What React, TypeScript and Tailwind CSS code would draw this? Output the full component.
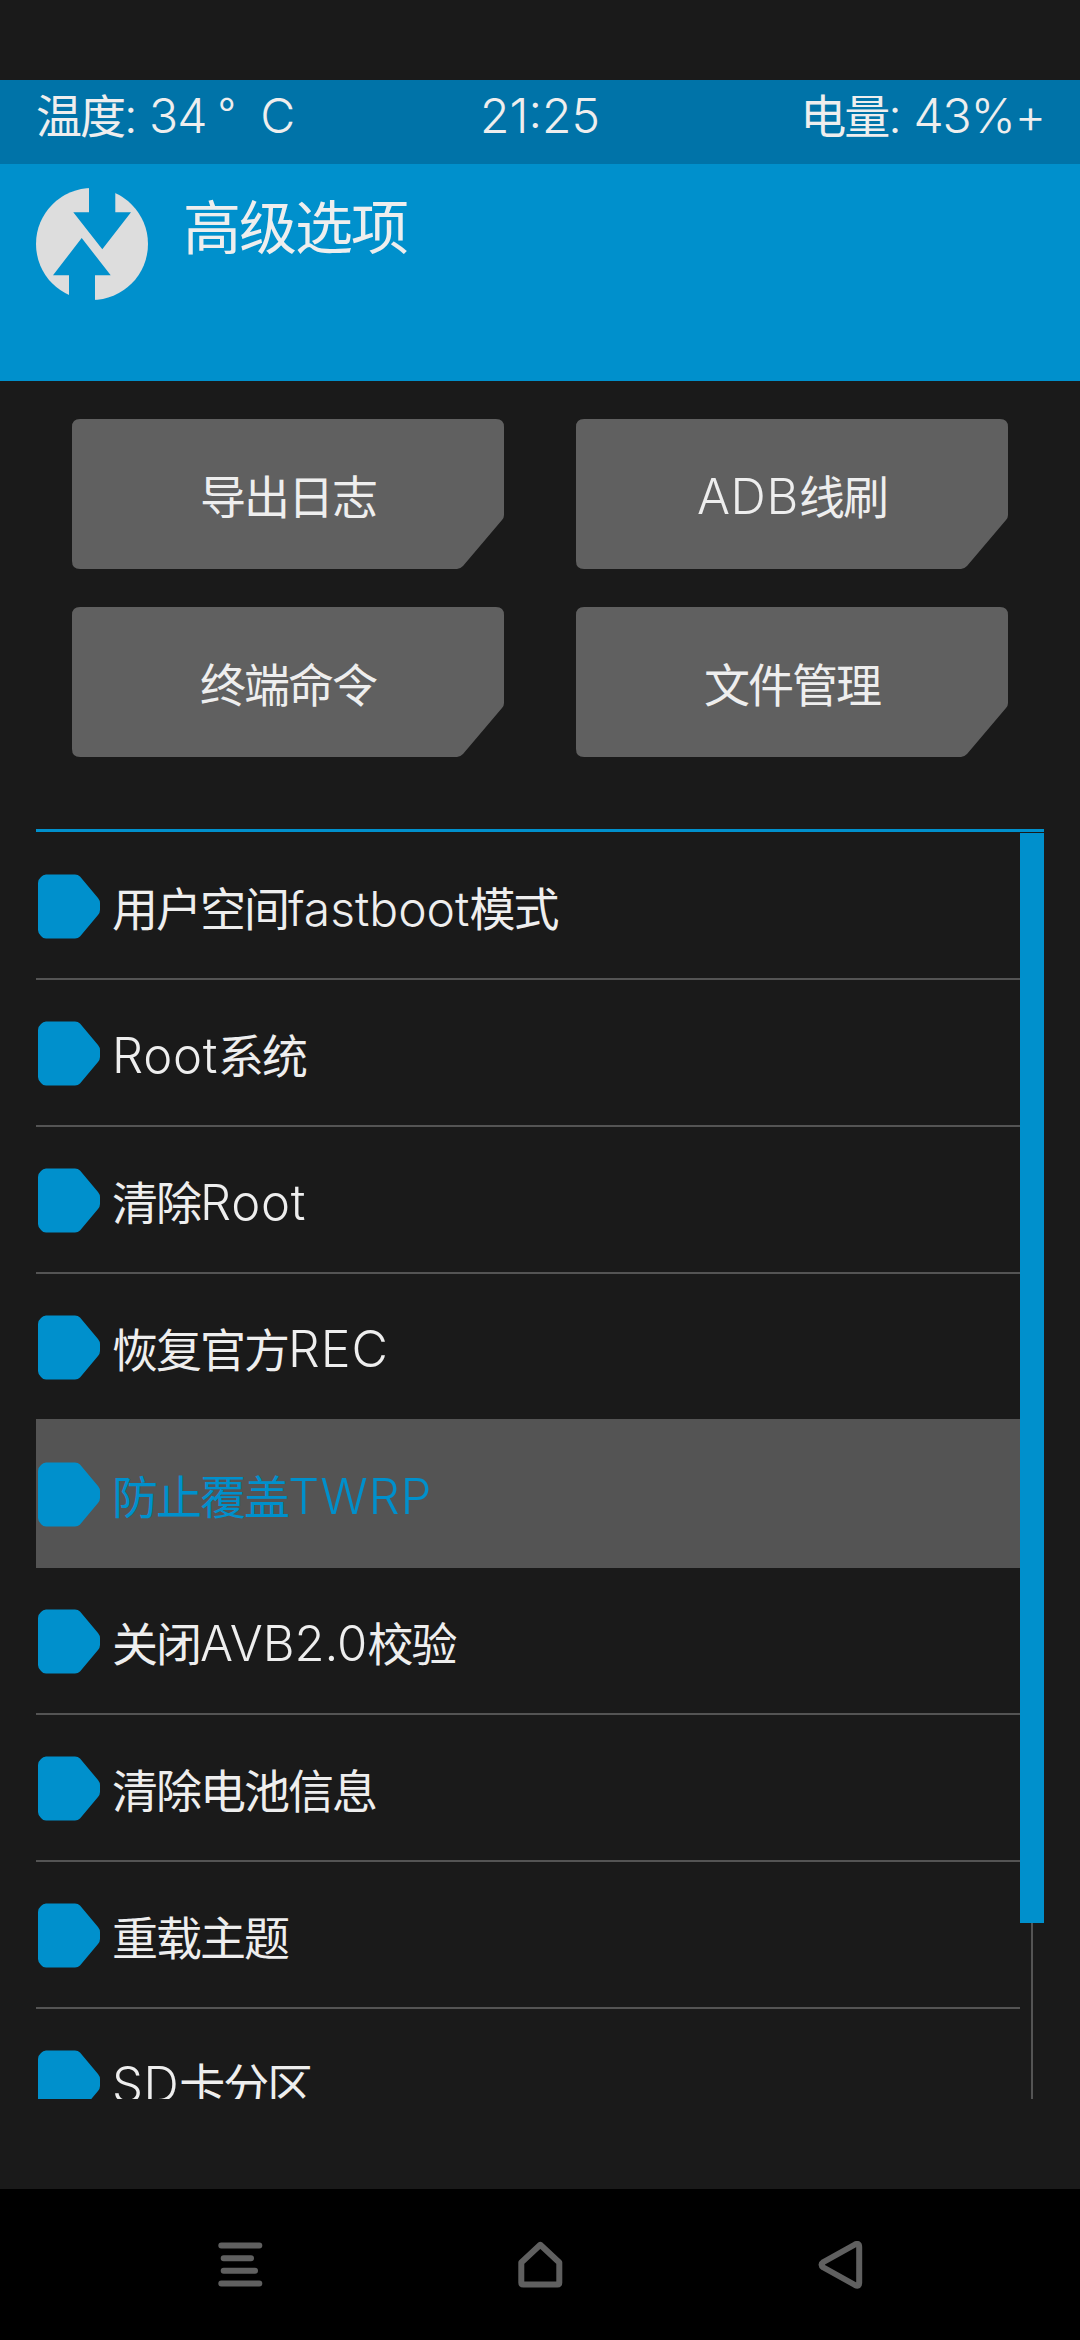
import React from "react";

const ROWS = [
  { text: "用户空间fastboot模式", latin: "text-[48px]" },
  { text: "Root系统", latin: "text-[49px] tracking-[0.7px]" },
  { text: "清除Root", latin: "text-[49px] tracking-[0.7px]" },
  { text: "恢复官方REC", latin: "text-[50px] tracking-[1px]" },
  { text: "防止覆盖TWRP", latin: "text-[49px] tracking-[1px]" },
  { text: "关闭AVB2.0校验", latin: "text-[49px]" },
  { text: "清除电池信息", latin: "text-[48px]" },
  { text: "重载主题", latin: "text-[48px]" },
  { text: "SD卡分区", latin: "text-[49px] tracking-[0.5px]" },
];
const SELECTED = 4;

/** Sets Latin runs in Inter and Han runs in Noto Sans CJK. */
function Mixed({ text, latin = "text-[48px]" }: { text: string; latin?: string }) {
  const runs = text.match(/[\x20-\x7e]+|[^\x20-\x7e]+/g) ?? [];
  return (
    <span className="whitespace-pre">
      {runs.map((run, i) =>
        /^[\x20-\x7e]/.test(run) ? (
          <span key={i} className={`font-['Inter','Liberation_Sans',sans-serif] font-[340] ${latin}`}>
            {run}
          </span>
        ) : (
          <span key={i} className="font-['Noto_Sans_CJK_SC',sans-serif] text-[46px] font-normal tracking-[-2px]">
            {run}
          </span>
        ),
      )}
    </span>
  );
}

function Logo() {
  return (
    <svg className="size-[112px]" viewBox="36 188 112 112">
      <circle cx="92" cy="244" r="56" fill="#dddddd" />
      <path
        fill="#0090cc"
        d="M89 186V212.3H73.3L102.3 249.3L131 212.3H115.3V186ZM69 302V275.3H53L81.7 238L110.7 275.3H95V302Z"
      />
    </svg>
  );
}

function ActionButton({ label }: { label: string }) {
  return (
    <button className="relative flex h-[150px] w-[432px] items-center justify-center">
      <svg className="absolute inset-0" width="432" height="150" viewBox="0 0 432 150">
        <path
          fill="#606060"
          d="M8 0H424Q432 0 432 8V96Q432 99 430 101L391 147Q388 150 385 150H8Q0 150 0 142V8Q0 0 8 0Z"
        />
      </svg>
      <span className="relative pt-[13px] leading-[60px]">
        <Mixed text={label} latin="text-[49px] tracking-[0.7px]" />
      </span>
    </button>
  );
}

function Bullet() {
  return (
    <svg className="h-[65px] w-[62px] shrink-0" viewBox="0 0 62 65">
      <path
        fill="#0090cc"
        d="M8 0.5H37Q40 0.5 42 2.5L60 24Q62 26.5 62 29V36Q62 38.5 60 41L42 62.5Q40 64.5 37 64.5H8Q5 64.5 3 62Q0 59.5 0 56V9Q0 5.500 3 3Q5 0.5 8 0.5Z"
      />
    </svg>
  );
}

function Row({ text, latin, selected }: { text: string; latin: string; selected: boolean }) {
  return (
    <li
      className={
        selected
          ? "-mt-[2px] flex h-[149px] shrink-0 items-start border-b-2 border-[#545454] bg-[#545454] pt-[43px] pl-[2px] text-[#0090cc]"
          : "flex h-[147px] shrink-0 items-start border-b-2 border-[#545454] pt-[41px] pl-[2px] text-[#eeeeee]"
      }
    >
      <Bullet />
      <span className="pt-[2px] pl-3 leading-[60px]">
        <Mixed text={text} latin={latin} />
      </span>
    </li>
  );
}

export default function App() {
  return (
    <div className="flex h-[2340px] w-[1080px] flex-col overflow-hidden bg-[#1a1a1a] pt-20 text-[#eeeeee]">
      <div className="grid h-[84px] shrink-0 grid-cols-3 items-baseline bg-[#0073a8] px-9 pt-[3px] leading-[60px]">
        <span className="whitespace-nowrap">
          <Mixed text="温度: 34" latin="text-[48px] tracking-[-1px]" />
          <span className="inline-block w-[54px] pl-[12px] font-['Noto_Sans_CJK_SC',sans-serif] text-[46px] font-normal">
            °
          </span>
          <Mixed text="C" />
        </span>
        <span className="text-center">
          <Mixed text="21:25" />
        </span>
        <span className="-mr-px text-right">
          <Mixed text="电量: 43%+" latin="text-[48px] tracking-[-1px]" />
        </span>
      </div>

      <header className="flex h-[217px] shrink-0 items-start bg-[#0090cc] pt-6 pl-9">
        <Logo />
        <h1 className="-mt-[2px] pl-[35px] font-['Noto_Sans_CJK_SC',sans-serif] text-[58px] leading-[76px] font-normal tracking-[-2px]">
          高级选项
        </h1>
      </header>

      <div className="grid shrink-0 grid-cols-2 gap-x-[72px] gap-y-[38px] px-[72px] pt-[38px]">
        <ActionButton label="导出日志" />
        <ActionButton label="ADB线刷" />
        <ActionButton label="终端命令" />
        <ActionButton label="文件管理" />
      </div>

      <main className="mx-9 mt-[72px] h-[1270px] shrink-0 border-t-[3px] border-[#0090cc] pt-px">
        <div className="flex h-[1266px] overflow-hidden">
          <ul className="flex w-[984px] flex-col overflow-hidden">
            {ROWS.map((r, i) => (
              <Row key={r.text} text={r.text} latin={r.latin} selected={i === SELECTED} />
            ))}
          </ul>
          <div className="flex w-6 flex-col items-center">
            <div className="h-[1090px] w-6 bg-[#0090cc]" />
            <div className="w-[2px] flex-1 bg-[#545454]" />
          </div>
        </div>
      </main>

      <nav className="mt-auto flex h-[151px] shrink-0 items-center justify-between bg-black px-[216px]">
        <svg className="size-12" viewBox="0 0 48 48" stroke="#606060" strokeWidth="6" strokeLinecap="round">
          <path d="M5.300 4.400H43.300M7.700 17.200H35M7.700 29.800H39M5.300 42.500H43.300" />
        </svg>
        <svg className="size-12" viewBox="0 0 48 48" fill="none" stroke="#606060" strokeWidth="6" strokeLinejoin="round">
          <path d="M24.300 3.800L43.300 21.500V41.500Q43.300 43.500 41.300 43.500H7.300Q5.300 43.500 5.300 41.500V21.500Z" />
        </svg>
        <svg className="size-12" viewBox="0 0 48 48" fill="none" stroke="#606060" strokeWidth="6" strokeLinejoin="round">
          <path d="M43.200 6Q43.200 1.500 39 3.500L7.500 21Q3.500 23.700 7.500 26.500L39 44Q43.200 46 43.200 42Z" />
        </svg>
      </nav>
    </div>
  );
}
